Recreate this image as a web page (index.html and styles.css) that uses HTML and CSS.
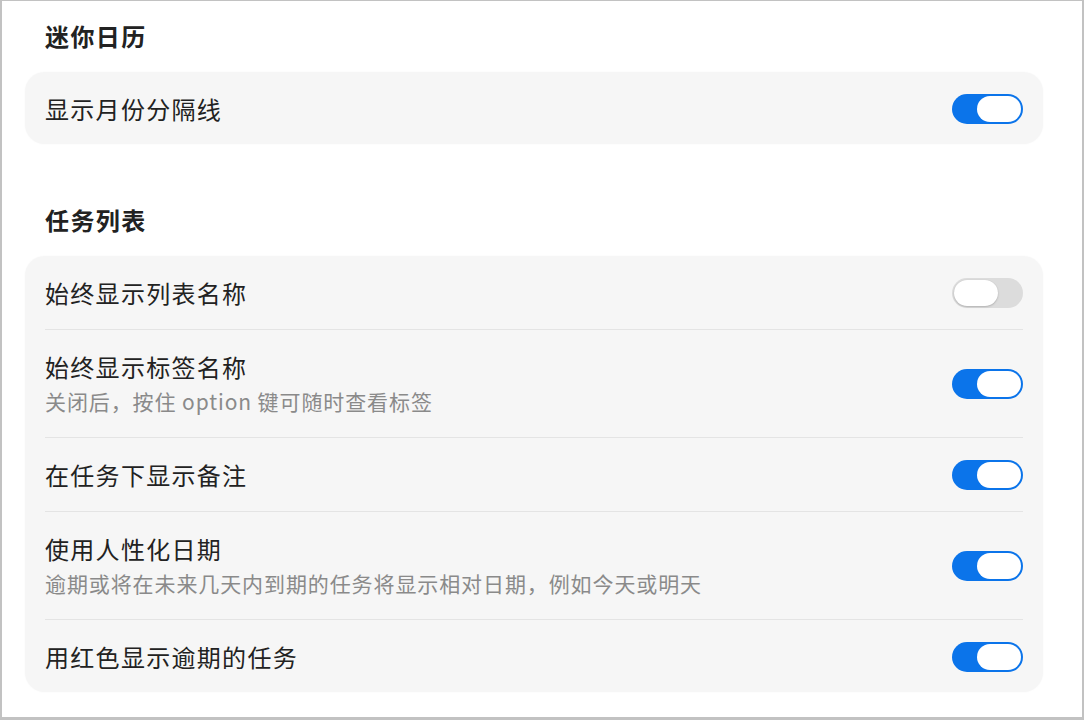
FILE: index.html
```html
<!DOCTYPE html>
<html lang="zh-CN">
<head>
<meta charset="utf-8">
<title>设置</title>
<link rel="stylesheet" href="styles.css">
</head>
<body>
<div class="window">
  <section class="section">
    <h2 class="section-title">迷你日历</h2>
    <div class="card">
      <div class="row">
        <div class="row-text"><div class="label">显示月份分隔线</div></div>
        <span class="toggle on"><span class="knob"></span></span>
      </div>
    </div>
  </section>
  <section class="section second">
    <h2 class="section-title">任务列表</h2>
    <div class="card">
      <div class="row">
        <div class="row-text"><div class="label">始终显示列表名称</div></div>
        <span class="toggle"><span class="knob"></span></span>
      </div>
      <div class="row">
        <div class="row-text">
          <div class="label">始终显示标签名称</div>
          <div class="sub">关闭后，按住 option 键可随时查看标签</div>
        </div>
        <span class="toggle on"><span class="knob"></span></span>
      </div>
      <div class="row">
        <div class="row-text"><div class="label">在任务下显示备注</div></div>
        <span class="toggle on"><span class="knob"></span></span>
      </div>
      <div class="row">
        <div class="row-text">
          <div class="label">使用人性化日期</div>
          <div class="sub">逾期或将在未来几天内到期的任务将显示相对日期，例如今天或明天</div>
        </div>
        <span class="toggle on"><span class="knob"></span></span>
      </div>
      <div class="row">
        <div class="row-text"><div class="label">用红色显示逾期的任务</div></div>
        <span class="toggle on"><span class="knob"></span></span>
      </div>
    </div>
  </section>
</div>
</body>
</html>
```
FILE: styles.css
```css
* { box-sizing: border-box; }
html, body { margin: 0; padding: 0; background: #ffffff; }
body {
  font-family: "Noto Sans CJK SC", "Noto Sans", "Liberation Sans", sans-serif;
  color: #1d1d1f;
}
.window {
  width: 1084px;
  height: 720px;
  border: 2px solid #c2c2c2;
  border-top-width: 1px;
  border-bottom-width: 3px;
  padding: 19px 39px 0 23px;
  overflow: hidden;
  background: #fff;
}
.section.second { margin-top: 60px; }
.section-title {
  margin: 0 0 21px 20px;
  font-size: 24px;
  line-height: 31px;
  font-weight: 700;
  color: #222;
  letter-spacing: 1.4px;
}
.card {
  background: #f6f6f6;
  border-radius: 20px;
  padding: 0 20px;
  box-shadow: 0 0 2px rgba(0,0,0,0.04);
}
.row {
  display: flex;
  align-items: center;
  justify-content: space-between;
  padding: 20px 0 19px;
  border-bottom: 1px solid #e4e4e4;
}
.row:last-child { border-bottom: none; padding-bottom: 18px; }
.label {
  font-size: 24px;
  line-height: 34px;
  letter-spacing: 1.3px;
  color: #222;
}
.sub {
  font-size: 21px;
  line-height: 34px;
  letter-spacing: 0.9px;
  color: #8a8a8a;
}
.toggle {
  flex: none;
  position: relative;
  width: 71px;
  height: 30px;
  border-radius: 15px;
  background: #dcdcdc;
}
.toggle.on { background: #0b74ea; }
.knob {
  position: absolute;
  top: 2px;
  left: 2px;
  width: 44px;
  height: 26px;
  border-radius: 13px;
  background: #fff;
  box-shadow: 0 1px 2px rgba(0,0,0,0.18), 0 0 1px rgba(0,0,0,0.1);
}
.toggle.on .knob { left: 25px; box-shadow: none; }
```
